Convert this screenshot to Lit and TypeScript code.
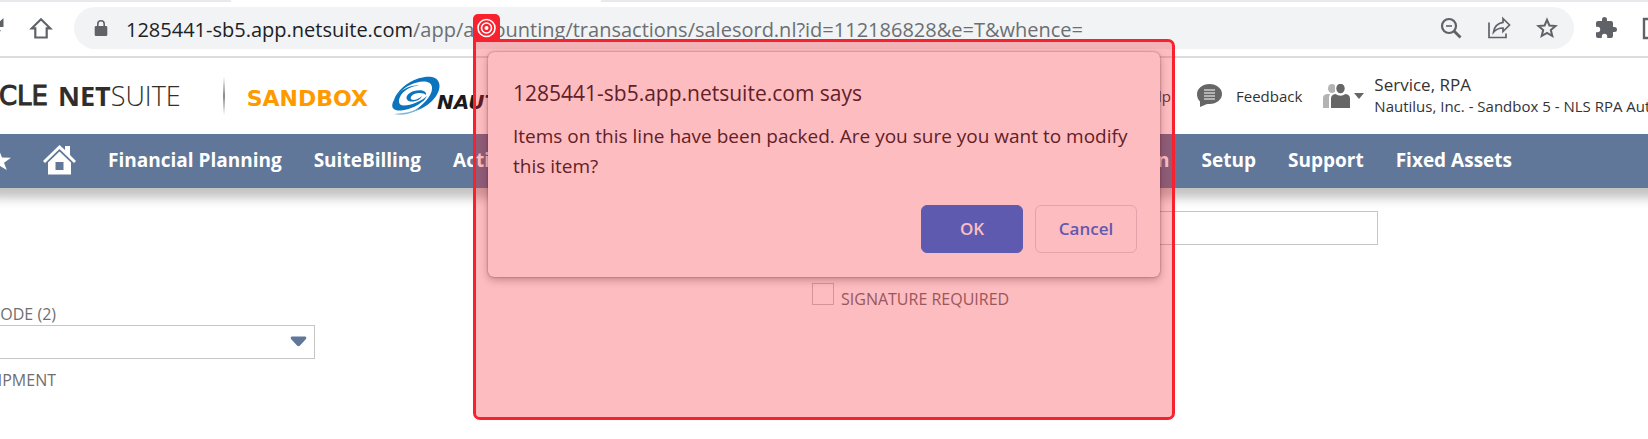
import { LitElement, html, css, svg } from "lit";
import { customElement } from "lit/decorators.js";

const icon = (cls: string, box: string, body: unknown) =>
  html`<svg class=${cls} viewBox=${box} aria-hidden="true">${body}</svg>`;

@customElement("browser-bar")
export class BrowserBar extends LitElement {
  static styles = css`
    :host { display: block; color: #5f6368; }
    * { box-sizing: border-box; }
    .strip { display: flex; height: 2px; background: #e8e8ed; }
    .tab { width: 370px; margin-left: 231px; background: #fff; }
    .bar {
      display: flex; align-items: center; height: 56px; padding: 0 0 2px;
      background: #fff; border-bottom: 2px solid #dcdcdc; overflow: hidden;
    }
    button { display: flex; flex: none; padding: 0; border: 0; background: none; color: inherit; }
    svg { display: block; fill: currentColor; }
    .reload { width: 24px; height: 24px; margin-left: -19px; }
    .home { width: 26px; height: 26px; }
    .home-btn { margin: 0 20px 0 23px; }
    .address {
      display: flex; flex: 1; align-items: center; gap: 24px; height: 42px; min-width: 0;
      padding: 0 15px 0 20px; border-radius: 21px; background: #f1f3f4;
    }
    .lock { width: 14px; height: 18px; flex: none; }
    .url {
      flex: 1; margin-left: -6px; padding-top: 3px; overflow: hidden; white-space: nowrap;
      font: 20px/30px "Open Sans", sans-serif; color: #6b6f73;
    }
    .host { color: #202124; }
    .tool { width: 24px; height: 24px; }
    .ext { margin: 0 24px 0 20px; }
    .side { width: 24px; height: 24px; margin-right: -18px; }
  `;
  render() {
    return html`
      <div class="strip"><div class="tab"></div></div>
      <div class="bar">
        <button aria-label="Reload">${icon("reload", "0 0 24 24", svg`<path d="M17.65 6.35A8 8 0 1 0 19.7 14h-2.3a5.7 5.7 0 1 1-1.4-6L13 11h9.500V2z"/>`)}</button>
        <button class="home-btn" aria-label="Home">${icon("home", "0 0 26 26", svg`<path d="M13 4.300 3.800 13.300h3.500v9.200h11.400v-9.200h3.500z" fill="none" stroke="currentColor" stroke-width="2.200"/>`)}</button>
        <div class="address">
          ${icon("lock", "0 0 14 18", svg`<path d="M2 7h1V5a4 4 0 0 1 8 0v2h1a1.300 1.300 0 0 1 1.300 1.300v7.400A1.300 1.300 0 0 1 12 17H2a1.300 1.300 0 0 1-1.300-1.300V8.300A1.300 1.300 0 0 1 2 7zm2.600 0h4.800V5a2.400 2.400 0 0 0-4.800 0z"/>`)}
          <div class="url"><span class="host">1285441-sb5.app.netsuite.com</span>/app/accounting/transactions/salesord.nl?id=112186828&amp;e=T&amp;whence=</div>
          <button aria-label="Zoom">${icon("tool", "0 0 24 24", svg`<g fill="none" stroke="currentColor"><circle cx="10" cy="10" r="7" stroke-width="2.200"/><path d="M7 10h6" stroke-width="1.600"/><path d="m15 15 6.500 6.500" stroke-width="2.800"/></g>`)}</button>
          <button aria-label="Share">${icon("tool", "0 0 24 24", svg`<path d="M2 6.500V21.500h17v-4M16 2.500l6.500 6.500-6.500 6.500V12c-4 0-7 1.200-9.500 4.300.5-5 4-9.300 9.500-10z" fill="none" stroke="currentColor" stroke-width="1.700"/>`)}</button>
          <button aria-label="Bookmark">${icon("tool", "0 0 24 24", svg`<path d="m12 3.800 2.400 5.700 6.100.5-4.700 4 1.500 6-5.300-3.200L6.700 20l1.500-6-4.700-4 6.100-.5z" fill="none" stroke="currentColor" stroke-width="2"/>`)}</button>
        </div>
        <button class="ext" aria-label="Extensions">${icon("tool", "0 0 24 24", svg`<path d="M20.500 11H19V7a2 2 0 0 0-2-2h-4V3.500a2.500 2.500 0 0 0-5 0V5H4a2 2 0 0 0-2 2v3.800h1.500a2.700 2.700 0 0 1 0 5.400H2V20a2 2 0 0 0 2 2h3.800v-1.500a2.700 2.700 0 0 1 5.400 0V22H17a2 2 0 0 0 2-2v-4h1.500a2.500 2.500 0 0 0 0-5z"/>`)}</button>
        <button aria-label="Side panel">${icon("side", "0 0 24 24", svg`<path d="M2 3h20v19H2z" fill="none" stroke="currentColor" stroke-width="2.400"/>`)}</button>
      </div>`;
  }
}

@customElement("suite-header")
export class SuiteHeader extends LitElement {
  static styles = css`
    :host { display: block; font-family: "Open Sans", sans-serif; color: #333; }
    * { box-sizing: border-box; }
    svg { display: block; flex: none; }
    .top {
      display: flex; align-items: center; height: 76px; overflow: hidden; white-space: nowrap;
      background: #fff; position: relative; z-index: 1;
    }
    .oracle {
      display: flex; flex: none; justify-content: flex-end; width: 48px; overflow: hidden;
      font: 26px/30px "DejaVu Sans", sans-serif; color: #312d2a; -webkit-text-stroke: 1px #312d2a;
    }
    .suite { margin-left: 10px; font-size: 27px; font-weight: 300; line-height: 30px; color: #312d2a; }
    .suite b { font-weight: 700; }
    .rule { width: 2px; height: 38px; margin: 0 22px 0 42px; background: linear-gradient(#fff, #888 50%, #fff); }
    .sandbox { font: bold 22px/30px "DejaVu Sans", sans-serif; color: #ff9900; padding-top: 6px; }
    .swirl { width: 49px; height: 40px; margin-left: 24px; }
    .client { font: italic bold 20px/30px "DejaVu Sans", sans-serif; color: #1d1a1b; margin-left: -4px; padding-top: 12px; }
    .right { display: flex; align-items: center; margin-left: auto; width: 513px; flex: none; }
    .right > * { flex: none; }
    .help, .feedback { color: inherit; text-decoration: none; font-size: 15px; line-height: 20px; }
    .help { width: 36px; text-align: right; }
    .bubble { width: 25px; height: 24px; margin: 0 14px 0 26px; }
    .role { display: flex; align-items: center; gap: 4px; margin: 0 10px 0 21px; padding: 0; border: 0; background: none; }
    .people { width: 27px; height: 24px; }
    .caret { width: 10px; height: 6px; }
    .who { display: flex; flex-direction: column; padding-bottom: 3px; }
    .name { font-size: 17px; line-height: 23px; }
    .org { font-size: 15px; line-height: 20px; }
    nav {
      display: flex; align-items: center; gap: 32px; height: 54px; padding: 0 136px 2px 0;
      background: #607799; box-shadow: 0 0 10px 10px rgba(0, 0, 0, 0.24);
      white-space: nowrap;
    }
    nav a { color: #fff; text-decoration: none; font-size: 19px; font-weight: 700; line-height: 26px; }
    .star { width: 24px; height: 20px; margin-left: -13px; }
    .house { width: 33px; height: 30px; }
    .last { margin-left: auto; }
  `;
  render() {
    return html`
      <div class="top">
        <span class="oracle">ORACLE</span>
        <span class="suite"><b>NET</b>SUITE</span>
        <span class="rule"></span>
        <span class="sandbox">SANDBOX</span>
        ${icon("swirl", "0 0 49 40", svg`<g fill="#0b74bc">
          <path d="M2 24C8 8 28-1 40 1c10 2 10 14 0 24-6 6-13 9-20 11C30 30 41 20 40 11 39 4 28 4 18 9 10 13 5 19 2 24z"/>
          <path d="M2 24c-4 7-1 11 7 10.500C18 34 32 27 35 20 30 25 18 30 11 29.500 6 29 6 24 9 19c5-7 15-10 19-9C20 8 6 14 2 24z"/>
          <path d="M20 25.500c-8 0-7-8 2-10.500 7-2 13 0 12 4-2-3-13-3-15 2-1 2 0 3 3 3 3-.5 6-2 8-4-1 3-5 5.500-10 5.500z"/></g>
          <path d="M2 38c10-.5 19-2.500 26-6-6 5-16 8-26 6z" fill="#79b5dd"/>`)}
        <span class="client">NAUTILUS</span>
        <div class="right">
          <a class="help" href="#help">Help</a>
          ${icon("bubble", "0 0 25 24", svg`<path d="M12.500 0C19.500 0 25 4.500 25 10s-5.500 10-12.500 10c-1 0-2 0-3 .3L3 23v-5.500C1 15.500 0 13 0 10 0 4.500 5.500 0 12.500 0z" fill="#666"/><path d="M7 6h11M7 9h11M7 12h11M7 15h11" stroke="#fff" stroke-width="1.200"/>`)}
          <a class="feedback" href="#feedback">Feedback</a>
          <button class="role" aria-label="Change role">
            ${icon("people", "0 0 27 24", svg`<g fill="#b3b3b3"><ellipse cx="9" cy="4.500" rx="4" ry="4.500"/><path d="M0 24V14q0-3.500 4-4h3l-1 3v11z"/></g><path d="M7 24V11.500h3L12 9V0h2v24z" fill="#fff"/><g fill="#666"><ellipse cx="17.500" cy="4.500" rx="4.200" ry="4.800"/><path d="M8 24V14.500q0-4 4.500-4.500 5 3.500 10 0 4.500.5 4.500 4.500V24z"/></g>`)}
            ${icon("caret", "0 0 10 6", svg`<path d="M0 0h10L5 6z" fill="#666"/>`)}
          </button>
          <div class="who"><span class="name">Service, RPA</span><span class="org">Nautilus, Inc. - Sandbox 5 - NLS RPA Automation</span></div>
        </div>
      </div>
      <nav>
        <a href="#shortcuts" aria-label="Shortcuts">${icon("star", "0 0 24 20", svg`<path d="m12 0 3 7.500 9 .3-7 5 2.800 7.200L12 15.500 4.200 20 7 12.800 0 7.800l9-.3z" fill="#fff"/>`)}</a>
        <a href="#home" aria-label="Home">${icon("house", "0 0 33 30", svg`<g fill="#fff"><path d="M16.500 0 22 5V1h5v9l6 6-2 2L16.500 4 2 18l-2-2z"/><path d="M16.500 6.500 28 17.500V29.500H5v-12zM12.500 17v8h8v-8z" fill-rule="evenodd"/></g>`)}</a>
        <a href="#fp">Financial Planning</a>
        <a href="#sb">SuiteBilling</a>
        <a href="#act">Activities</a>
        <a class="last" href="#cust">Customization</a>
        <a href="#setup">Setup</a>
        <a href="#support">Support</a>
        <a href="#fa">Fixed Assets</a>
      </nav>`;
  }
}

@customElement("order-form")
export class OrderForm extends LitElement {
  static styles = css`
    :host {
      display: grid; grid-template-columns: 203fr 209fr; padding-top: 23px;
      font: 16px/22px "Open Sans", sans-serif; color: #6f6f6f;
    }
    * { box-sizing: border-box; }
    .left { padding-top: 92px; }
    .tag { display: flex; justify-content: flex-end; width: 56px; overflow: hidden; white-space: nowrap; }
    .pick { position: relative; width: 315px; margin: 0 0 10px; }
    select, .text { display: block; height: 34px; border: 1px solid #c6c6c6; border-radius: 0; background: #fff; }
    select { width: 100%; border-left: 0; appearance: none; }
    .arrow { position: absolute; right: 8px; top: 11px; width: 17px; height: 11px; pointer-events: none; }
    .text { width: 350px; margin: 0 270px 38px auto; }
    .check { display: flex; gap: 7px; }
    .check input { appearance: none; flex: none; width: 22px; height: 22px; margin: 0; border: 1px solid #c6c6c6; background: #fff; }
    .check label { padding-top: 5px; }
  `;
  render() {
    return html`
      <div class="left">
        <label class="tag" for="code">CODE (2)</label>
        <div class="pick">
          <select id="code"><option></option></select>
          ${icon("arrow", "0 0 17 11", svg`<path d="M2 .5h13q2 .5 1 2.500L10 9.500q-1.500 1.500-3 0L1 3Q0 1 2 .5z" fill="#607799"/>`)}
        </div>
        <div class="tag">SHIPMENT</div>
      </div>
      <div>
        <input class="text" type="text" aria-label="Value" />
        <div class="check"><input id="sig" type="checkbox" /><label for="sig">SIGNATURE REQUIRED</label></div>
      </div>`;
  }
}

@customElement("app-root")
export class AppRoot extends LitElement {
  static styles = css`
    :host { display: block; position: relative; min-height: 100vh; overflow: hidden; background: #fff; }
    * { box-sizing: border-box; }
    .dialog {
      position: absolute; z-index: 2; top: 52px; left: 0; right: 0; margin: 0 auto; width: 672px; padding: 25px 23px 24px 25px;
      border-radius: 6px; background: #fff; color: #202124; font-family: "Open Sans", sans-serif;
      box-shadow: 0 0 2px rgba(0, 0, 0, 0.5), 0 3px 8px rgba(0, 0, 0, 0.3);
    }
    h1 { margin: 0 0 12px; font-size: 21px; font-weight: 400; line-height: 32px; }
    p { margin: 0 0 24px; font-size: 19px; line-height: 30px; }
    .actions { display: flex; justify-content: flex-end; gap: 12px; }
    .actions button {
      width: 102px; height: 48px; padding: 0; border: 1px solid #dadce0; border-radius: 6px;
      background: #fff; color: #1a73e8; font: 600 17px/24px "Open Sans", sans-serif;
    }
    .actions .ok { background: #1a73e8; border-color: #1a73e8; color: #fff; }
    .mark {
      position: absolute; z-index: 3; top: 39px; left: 0; right: 0; margin: 0 auto; width: 702px; height: 381px;
      border: 3px solid #f8222e; border-radius: 0 7px 7px 7px; background: rgba(248, 34, 46, 0.3);
      background-clip: padding-box; pointer-events: none;
    }
    .badge { position: absolute; left: -3px; bottom: 100%; width: 27px; height: 28px; border-radius: 5px 5px 0 0; background: #f8222e; }
    .target { display: block; width: 27px; height: 28px; }
  `;
  render() {
    return html`
      <browser-bar></browser-bar>
      <suite-header></suite-header>
      <order-form></order-form>
      <div class="dialog" role="alertdialog" aria-labelledby="title" aria-describedby="msg">
        <h1 id="title">1285441-sb5.app.netsuite.com says</h1>
        <p id="msg">Items on this line have been packed. Are you sure you want to modify this item?</p>
        <div class="actions"><button class="ok">OK</button><button>Cancel</button></div>
      </div>
      <div class="mark">
        <div class="badge">${icon("target", "0 0 27 28", svg`<g fill="none" stroke="#fff" stroke-width="1.600"><circle cx="13.500" cy="14" r="8.500"/><circle cx="13.500" cy="14" r="5"/></g><circle cx="13.500" cy="14" r="2" fill="#fff"/>`)}</div>
      </div>`;
  }
}
